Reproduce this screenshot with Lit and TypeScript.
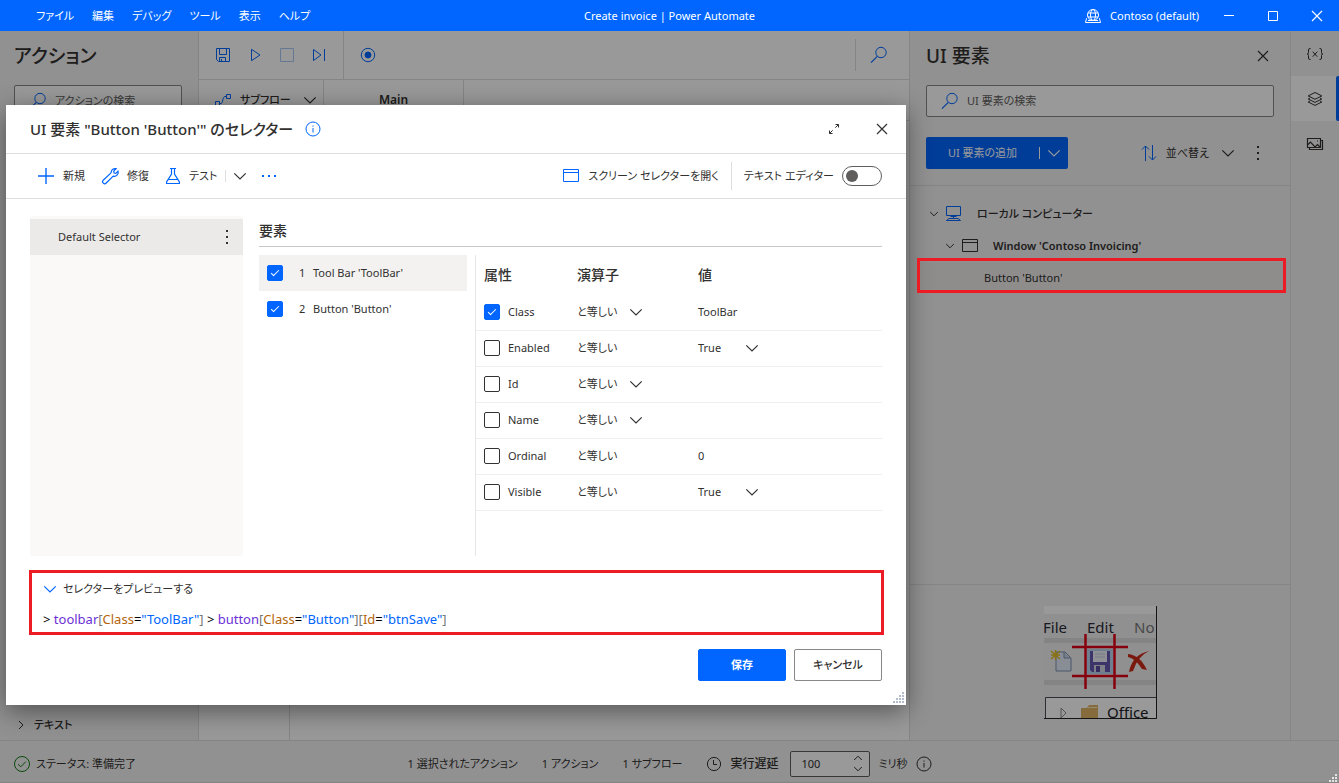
import { LitElement, html, svg, css, nothing } from "lit";
import { customElement } from "lit/decorators.js";
import { classMap } from "lit/directives/class-map.js";

const shapes: Record<string, { w: number; h: number; body: unknown }> = {
  save: { w: 16, h: 16, body: svg`<path d="M1.5 1.5h13v13H3.5l-2-2zM4.5 1.5v6h7v-6M4.5 14.5v-4h6v4M6.5 14v-2"/>` },
  play: { w: 16, h: 16, body: svg`<path d="M4.500 2.300v11.400l8.500-5.700z"/>` },
  stop: { w: 16, h: 16, body: svg`<path d="M1.500 1.500h13v13h-13z"/>` },
  step: { w: 16, h: 16, body: svg`<path d="M2.500 2.500v11l7.500-5.500zM13.500 2v12"/>` },
  record: { w: 16, h: 16, body: svg`<circle cx="8" cy="8" r="6.700"/><circle cx="8" cy="8" r="3" class="solid"/>` },
  search: { w: 18, h: 18, body: svg`<circle cx="11" cy="6.500" r="5.200"/><path d="M7.300 10.300L1 16.700" stroke-width="1.200"/>` },
  flow: { w: 18, h: 14, body: svg`<path d="M1.500 8.500h4v4h-4zM12.500 1.500h4v4h-4zM5.500 10.500h1.500c2 0 1.500-7 4-7h1.500"/>` },
  down: { w: 14, h: 14, body: svg`<path d="M1.300 4.300L7 10l5.700-5.700" stroke-width="1.200"/>` },
  downSmall: { w: 10, h: 10, body: svg`<path d="M1.200 3L5 6.800 8.800 3"/>` },
  upSmall: { w: 10, h: 10, body: svg`<path d="M1.200 7L5 3.200 8.800 7"/>` },
  right: { w: 10, h: 10, body: svg`<path d="M3 1l4 4-4 4"/>` },
  close: { w: 14, h: 14, body: svg`<path d="M2 2l10 10M12 2L2 12" stroke-width="1.200"/>` },
  minimize: { w: 12, h: 12, body: svg`<path d="M1 5.500h10"/>` },
  maximize: { w: 12, h: 12, body: svg`<path d="M1.500 1.500h9v9h-9z"/>` },
  globe: {
    w: 18,
    h: 16,
    body: svg`<circle cx="9" cy="7" r="5.500"/><ellipse cx="9" cy="7" rx="2.500" ry="5.500"/><path d="M4 5h10M4 9h10M3 10.500H2.500l-1 4h15l-1-4H15M4 12.500h10"/>`,
  },
  sort: { w: 18, h: 18, body: svg`<path d="M5.500 17V2M2 5.500L5.500 2 9 5.500M12.500 1v15M9 12.500l3.500 3.500 3.500-3.500"/>` },
  more: {
    w: 4,
    h: 16,
    body: svg`<path class="dots" d="M1 1h2v2H1zM1 7h2v2H1zM1 13h2v2H1z"/>`,
  },
  moreWide: {
    w: 16,
    h: 4,
    body: svg`<path class="dots" d="M1 1h2v2H1zM7 1h2v2H7zM13 1h2v2h-2z"/>`,
  },
  computer: { w: 18, h: 18, body: svg`<path d="M1.500 1.500h14v9h-14zM8.500 10.500v3M5.500 11.500h6M4 13.500h9l2.500 2h-14z"/>` },
  window: { w: 18, h: 16, body: svg`<path d="M1.500 1.500h15v12h-15zM1.500 4.500h15"/>` },
  vars: { w: 18, h: 14, body: svg`<path d="M4.500 1.500H4q-1.500 0-1.500 1.500v2.500q0 1.500-1.300 1.500 1.300 0 1.300 1.500V11q0 1.500 1.500 1.500h.5M13.500 1.500h.5q1.500 0 1.500 1.500v2.500q0 1.500 1.300 1.500-1.300 0-1.300 1.500V11q0 1.500-1.500 1.500h-.5M6.700 4.700l4.600 5M11.300 4.700l-4.600 5"/>` },
  layers: { w: 16, h: 16, body: svg`<path d="M8 1.500l6.800 3.400L8 8.300 1.200 4.900zM3 7l-1.800 1L8 11.400 14.800 8 13 7M3 10l-1.800 1L8 14.400l6.800-3.400L13 10"/>` },
  images: { w: 18, h: 14, body: svg`<path d="M1.500 1.500h13v9h-13zM3.500 10.500v2h13v-9h-2M1.500 8l3-3 4.500 5 2.500-2.500 3 3M11 4h1" stroke-width="1.200"/>` },
  info: { w: 16, h: 16, body: svg`<circle cx="8" cy="8" r="7"/><path d="M8 7v4.500M8 4.500v1.200"/>` },
  plus: { w: 18, h: 18, body: svg`<path d="M9 1v16M1 9h16" stroke-width="1.400"/>` },
  wrench: { w: 18, h: 18, body: svg`<path d="M10.200 5.300a3.900 3.900 0 0 1 4.900-3.600l-2.400 2.500.4 1.800 1.800.4 2.100-2.200a3.900 3.900 0 0 1-4.800 4.900l-7 6.900a1.900 1.900 0 0 1-3-2.800l7-6.600z" stroke-width="1.200"/>` },
  flask: { w: 16, h: 18, body: svg`<path d="M5 1.500h6M6.500 1.500v5.500L1.600 15v1.500h12.800V15L9.500 7V1.500M3.500 12.500h9" stroke-width="1.200"/>` },
  expand: { w: 12, h: 12, body: svg`<path d="M7.500 1.500h3v3M10.500 1.500l-3.200 3.200M4.500 10.500h-3v-3M1.500 10.500l3.200-3.200"/>` },
  done: { w: 18, h: 18, body: svg`<circle cx="9" cy="9" r="7.500"/><path d="M5 9.200l2.800 2.600 5-5.200"/>` },
  clock: { w: 16, h: 16, body: svg`<circle cx="8" cy="8" r="6.600"/><path d="M7.500 4v4.500h3.500"/>` },
  grip: {
    w: 12,
    h: 12,
    body: svg`<path class="dots" d="M9 0h2v2H9zM6 3h2v2H6zM9 3h2v2H9zM3 6h2v2H3zM6 6h2v2H6zM9 6h2v2H9zM0 9h2v2H0zM3 9h2v2H3zM6 9h2v2H6zM9 9h2v2H9z"/>`,
  },
  gripSmall: {
    w: 9,
    h: 9,
    body: svg`<path class="dots" d="M6 0h2v2H6zM3 3h2v2H3zM6 3h2v2H6zM0 6h2v2H0zM3 6h2v2H3zM6 6h2v2H6z"/>`,
  },
};

const icon = (name: string, tone = "") => {
  const s = shapes[name];
  return html`<svg class="icon ${tone}" width=${s.w} height=${s.h} viewBox="0 0 ${s.w} ${s.h}" aria-hidden="true">${s.body}</svg>`;
};

const shared = css`
  :host {
    --blue: #0066ff;
    --ink: #323130;
    --line: #dedede;
    --panel: #f2f2f2;
    color: var(--ink);
    font-family: "Noto Sans", "Noto Sans CJK JP", sans-serif;
    font-size: 11px;
    line-height: 16px;
    font-feature-settings: "palt";
  }
  *, *::before, *::after { box-sizing: border-box; }
  h1, h2, p, ul { margin: 0; padding: 0; font-weight: 500; }
  ul { list-style: none; }
  button, input, select {
    font: inherit;
    font-feature-settings: inherit;
    color: inherit;
    margin: 0;
    padding: 0;
    border: 0;
    border-radius: 0;
    background: none;
    white-space: nowrap;
  }
  button { display: inline-flex; align-items: center; justify-content: center; }
  .icon { display: block; flex: none; fill: none; stroke: currentColor; stroke-width: 1; }
  .icon .solid, .icon .dots { fill: currentColor; }
  .icon .dots { stroke: none; }
  .blue { color: var(--blue); }
  .pale { color: #a9c8f5; }
  .green { color: #107c10; }
`;

@customElement("selector-dialog")
export class SelectorDialog extends LitElement {
  static styles = [
    shared,
    css`
      :host { display: flex; flex-direction: column; background: #fff; position: relative; }
      header { display: flex; align-items: center; height: 49px; padding: 0 12px 0 24px; border-bottom: 1px solid var(--line); }
      header h1 { font-size: 15px; line-height: 20px; margin-right: 12px; }
      header .spacer, .tools .spacer { flex: 1; }
      header .sq { width: 24px; height: 32px; margin-left: 24px; }
      .tools { display: flex; align-items: center; height: 45px; padding: 0 24px 0 31px; border-bottom: 1px solid var(--line); }
      .tools button { gap: 8px; margin-right: 16px; }
      .tools .test { margin-right: 8px; }
      .tools .drop { margin-right: 14px; padding-left: 7px; border-left: 1px solid var(--line); height: 12px; }
      .tools .open { margin-right: 12px; }
      .tools label { display: flex; align-items: center; gap: 8px; border-left: 1px solid var(--line); height: 28px; padding-left: 12px; }
      .toggle { appearance: none; width: 40px; height: 20px; border: 1px solid #605e5c; border-radius: 10px; padding: 3px; display: flex; }
      .toggle::before { content: ""; width: 12px; height: 12px; border-radius: 50%; background: #605e5c; }
      .main { display: grid; grid-template-columns: 213px minmax(0, 1fr); gap: 16px; padding: 17px 24px 0; min-height: 357px; }
      .selectors { background: #faf9f8; border-radius: 3px; padding-top: 3px; }
      .selector { display: flex; align-items: center; justify-content: space-between; height: 36px; padding: 0 14px 0 28px; background: #ebeae9; }
      .elements { display: flex; flex-direction: column; }
      .elements h2 { font-size: 14px; line-height: 30px; border-bottom: 1px solid #c8c8c8; }
      .split { display: grid; grid-template-columns: 208px minmax(0, 1fr); gap: 8px; flex: 1; padding-top: 8px; }
      .item { display: flex; align-items: center; height: 36px; padding-left: 8px; }
      .item.on { background: #f3f2f1; }
      .item .num { width: 14px; margin-left: 16px; }
      .check { appearance: none; flex: none; width: 16px; height: 16px; border: 1px solid #323130; border-radius: 2px; display: grid; place-items: center; }
      .check:checked { background: var(--blue); border-color: var(--blue); }
      .check:checked::before { content: ""; width: 8px; height: 4px; border: solid #fff; border-width: 0 0 1px 1px; transform: translateY(-1px) rotate(-45deg); }
      .attrs { border-left: 1px solid #e6e6e6; }
      table { width: 100%; border-collapse: collapse; table-layout: fixed; }
      .c-name { width: 101px; }
      .c-op { width: 121px; }
      th { font-size: 14px; font-weight: 500; text-align: left; height: 39px; padding: 0; }
      th:first-child { padding-left: 8px; }
      td { height: 36px; padding: 0; border-bottom: 1px solid #efefef; }
      .attr { display: flex; align-items: center; gap: 8px; padding-left: 8px; }
      .pick { display: grid; align-items: center; width: 66px; }
      .pick.value { width: 61px; }
      .pick select { grid-area: 1 / 1; appearance: none; width: 100%; height: 20px; }
      .pick .icon { grid-area: 1 / 1; justify-self: end; pointer-events: none; }
      .preview { display: flex; flex-direction: column; align-items: flex-start; margin: 14px 22px 0 23px; border: 3px solid #ed1c24; padding: 8px 11px 3px; }
      .preview button { gap: 6px; }
      .code { font-size: 13px; line-height: 20px; font-weight: 400; margin-top: 12px; color: #000; }
      .tag { color: #6b2fd6; }
      .key { color: #b3640a; }
      .str { color: var(--blue); }
      .br { color: #767676; }
      footer { display: flex; justify-content: flex-end; gap: 8px; padding: 14px 24px 24px; }
      footer button { width: 88px; height: 32px; border-radius: 2px; border: 1px solid #8a8886; font-weight: 500; }
      footer .primary { background: var(--blue); border-color: var(--blue); color: #fff; font-weight: 600; }
      .resize { position: absolute; right: 1px; bottom: 1px; color: #b4bccb; }
    `,
  ];

  private elements = [
    { n: 1, label: "Tool Bar 'ToolBar'", on: true },
    { n: 2, label: "Button 'Button'", on: false },
  ];

  private attrs = [
    { name: "Class", checked: true, op: true, value: "ToolBar" },
    { name: "Enabled", value: "True", list: true },
    { name: "Id", op: true, value: "" },
    { name: "Name", op: true, value: "" },
    { name: "Ordinal", value: "0" },
    { name: "Visible", value: "True", list: true },
  ] as { name: string; checked?: boolean; op?: boolean; value: string; list?: boolean }[];

  private pick(label: string, text: string, value = false) {
    return html`<span class=${classMap({ pick: true, value })}><select aria-label=${label}><option>${text}</option></select>${icon("down")}</span>`;
  }

  render() {
    return html`
      <header>
        <h1>UI 要素 "Button 'Button'" のセレクター</h1>
        ${icon("info", "blue")}
        <span class="spacer"></span>
        <button class="sq" aria-label="最大化">${icon("expand")}</button>
        <button class="sq" aria-label="閉じる">${icon("close")}</button>
      </header>
      <div class="tools">
        <button>${icon("plus", "blue")}新規</button>
        <button>${icon("wrench", "blue")}修復</button>
        <button class="test">${icon("flask", "blue")}テスト</button>
        <button class="drop" aria-label="テスト オプション">${icon("down")}</button>
        <button class="blue" aria-label="その他">${icon("moreWide")}</button>
        <span class="spacer"></span>
        <button class="open">${icon("window", "blue")}スクリーン セレクターを開く</button>
        <label>テキスト エディター<input class="toggle" type="checkbox" role="switch" /></label>
      </div>
      <div class="main">
        <div class="selectors">
          <div class="selector">Default Selector<button aria-label="その他">${icon("more")}</button></div>
        </div>
        <div class="elements">
          <h2>要素</h2>
          <div class="split">
            <div>
              ${this.elements.map(
                (e) => html`<label class=${classMap({ item: true, on: e.on })}>
                  <input class="check" type="checkbox" checked /><span class="num">${e.n}</span>${e.label}
                </label>`
              )}
            </div>
            <div class="attrs">
              <table>
                <colgroup><col class="c-name" /><col class="c-op" /><col /></colgroup>
                <thead><tr><th>属性</th><th>演算子</th><th>値</th></tr></thead>
                <tbody>
                  ${this.attrs.map(
                    (a) => html`<tr>
                      <td><label class="attr"><input class="check" type="checkbox" ?checked=${!!a.checked} />${a.name}</label></td>
                      <td>${a.op ? this.pick(a.name + " 演算子", "と等しい") : "と等しい"}</td>
                      <td>${a.list ? this.pick(a.name + " 値", a.value, true) : a.value || nothing}</td>
                    </tr>`
                  )}
                </tbody>
              </table>
            </div>
          </div>
        </div>
      </div>
      <div class="preview">
        <button><span class="blue">${icon("down")}</span>セレクターをプレビューする</button>
        <p class="code">&gt; <span class="tag">toolbar</span><span class="br">[</span><span class="key">Class</span>=<span class="str">"ToolBar"</span><span class="br">]</span> &gt; <span class="tag">button</span><span class="br">[</span><span class="key">Class</span>=<span class="str">"Button"</span><span class="br">][</span><span class="key">Id</span>=<span class="str">"btnSave"</span><span class="br">]</span></p>
      </div>
      <footer><button class="primary">保存</button><button>キャンセル</button></footer>
      <span class="resize">${icon("grip")}</span>
    `;
  }
}

@customElement("app-root")
export class AppRoot extends LitElement {
  static styles = [
    shared,
    css`
      :host { display: flex; flex-direction: column; min-height: 100vh; position: relative; background: var(--panel); }
      .title { display: grid; grid-template-columns: 1fr auto 1fr; align-items: center; height: 31px; background: var(--blue); color: #fff; }
      .menu { display: flex; padding-left: 27px; }
      .menu button { padding: 0 9px; height: 31px; }
      .account { display: flex; align-items: center; justify-content: flex-end; }
      .account .name { margin: 0 8px; }
      .account button { width: 44px; height: 31px; }
      .work { flex: 1; display: flex; flex-direction: column; position: relative; }
      .panes { flex: 1; display: grid; grid-template-columns: 199px minmax(0, 1fr) 382px 48px; }
      .pane-title { font-size: 19px; line-height: 24px; }
      .find { display: flex; align-items: center; height: 32px; border: 1px solid #8a8886; border-radius: 2px; background: #fff; padding-left: 14px; gap: 8px; }
      .find input { flex: 1; min-width: 0; outline: 0; }
      .find input::placeholder { color: #605e5c; opacity: 1; }
      .actions { display: flex; flex-direction: column; border-right: 1px solid var(--line); padding: 13px 16px 0 14px; }
      .actions .find { margin-top: 17px; }
      .actions .group { display: flex; align-items: center; gap: 8px; height: 30px; margin-top: auto; font-weight: 500; padding-left: 2px; justify-content: flex-start; }
      .canvas { background: #fff; display: flex; flex-direction: column; }
      .bar { display: flex; align-items: center; height: 49px; border-bottom: 1px solid var(--line); }
      .bar .set { display: flex; align-items: center; height: 48px; padding: 0 8px; }
      .bar .set + .set { border-left: 1px solid var(--line); }
      .bar button { width: 32px; height: 32px; }
      .bar .seek { margin-left: auto; width: 54px; border-left: 1px solid var(--line); padding-right: 8px; }
      .tabs { display: flex; height: 41px; border-bottom: 1px solid var(--line); }
      .tabs button { border-right: 1px solid var(--line); gap: 8px; }
      .tabs .sub { width: 125px; font-weight: 500; justify-content: flex-start; padding-left: 15px; }
      .tabs .tab { width: 140px; font-size: 12px; font-weight: 600; }
      .tabs .sub .icon:last-child { margin-left: 4px; }
      .lines { flex: 1; width: 91px; border-right: 1px solid var(--line); }
      .ui { display: flex; flex-direction: column; border: solid var(--line); border-width: 0 1px; }
      .ui .head { display: flex; align-items: center; justify-content: space-between; padding: 13px 20px 0 16px; }
      .ui .find { margin: 17px 16px 0; }
      .cmds { display: flex; align-items: center; padding: 20px 16px 16px; border-bottom: 1px solid var(--line); }
      .add { width: 142px; height: 32px; border-radius: 2px; background: var(--blue); color: #fff; }
      .add .text { flex: 1; }
      .add .arrow { border-left: 1px solid #fff; height: 12px; padding: 0 7px; display: flex; align-items: center; }
      .order { margin-left: auto; gap: 8px; }
      .order .icon:last-child { margin-left: 4px; }
      .dots-btn { width: 16px; margin: 0 8px 0 15px; }
      .tree { flex: 1; padding-top: 12px; }
      .node { display: flex; align-items: center; height: 32px; gap: 6px; }
      .l1 { padding-left: 19px; font-weight: 500; }
      .l2 { padding-left: 35px; font-weight: 600; }
      .node .name { margin-left: 8px; }
      .l3 { height: 30px; margin: 0 4px 0 8px; padding: 2px 0 0 66px; background: #edebe9; font-weight: 400; position: relative; }
      .mark { position: absolute; inset: -4px 0 -1px -1px; border: 3px solid #ed1c24; z-index: 3; }
      .shot { border-top: 1px solid var(--line); display: grid; place-items: center; height: 156px; }
      .shot svg { display: block; }
      .rail { display: flex; flex-direction: column; }
      .rail button { height: 45px; }
      .rail .on { background: #fff; position: relative; }
      .rail .on::after { content: ""; position: absolute; right: 0; top: 0; bottom: 0; width: 3px; background: var(--blue); border-radius: 2px 0 0 2px; }
      .status { display: grid; grid-template-columns: 1fr auto 1fr; align-items: center; height: 43px; border: solid var(--line); border-width: 1px 0; padding: 4px 13px 0; }
      .state { display: flex; align-items: center; gap: 5px; }
      .counts { display: flex; align-items: center; gap: 24px; }
      .delay { display: flex; align-items: center; gap: 8px; }
      .delay label { font-weight: 500; font-size: 12px; margin-right: 4px; }
      .spin { display: flex; align-items: center; width: 80px; height: 26px; border: 1px solid #605e5c; border-radius: 2px; background: #fff; padding: 0 6px 0 10px; }
      .spin input { flex: 1; min-width: 0; outline: 0; appearance: textfield; }
      .spin input::-webkit-inner-spin-button { appearance: none; }
      .spin span { display: flex; flex-direction: column; gap: 1px; }
      .dim { position: absolute; inset: 0; background: rgba(0, 0, 0, 0.4); z-index: 1; }
      .modal { position: absolute; left: 6px; top: 74px; width: min(900px, calc(100% - 12px)); z-index: 2; box-shadow: 0 6px 24px rgba(0, 0, 0, 0.45); }
      .corner { position: absolute; right: 1px; bottom: 0; z-index: 3; color: #e4e4e4; }
    `,
  ];

  private snapshot() {
    return svg`<svg width="113" height="113" viewBox="0 0 113 113" role="img" aria-label="Button">
      <rect width="113" height="113" fill="#f0f0f0"/>
      <rect width="113" height="8" fill="#fff"/>
      <rect y="32" width="113" height="5" fill="#dcdcdc"/>
      <rect y="74" width="113" height="5" fill="#dcdcdc"/>
      <g font-family="Noto Sans, sans-serif" font-size="15" fill="#2b2b38">
        <text x="-1" y="27">File</text><text x="43" y="27">Edit</text><text x="90" y="27" fill="#777">No</text>
      </g>
      <path d="M12 46h9l6 6v13H12z" fill="#e4ecf8" stroke="#7d90ae"/><path d="M20 46v6h6" fill="#c6d6ec" stroke="#7d90ae"/>
      <path d="M7 45l9 8M16 45l-9 8M11.500 44v10M7 49h9" stroke="#e4bd23" stroke-width="1.500"/>
      <rect x="43" y="43" width="26" height="25" fill="#b8d4ee"/>
      <path d="M46 45h20v21H48l-2-2z" fill="#6658b0"/><rect x="49" y="45" width="14" height="11" fill="#eef1fa"/>
      <path d="M51 48h10M51 51h10" stroke="#c9cede"/><rect x="50" y="59" width="11" height="7" fill="#d2d6e2"/><rect x="52" y="60" width="4" height="6" fill="#5a4aa4"/>
      <path d="M84 48q12 1 19 16l-5-1Q91 52 84 51zM105 45Q94 50 89 65l-4 1Q88 49 105 45z" fill="#cc2a18"/>
      <path d="M28 41h56M28 70h56M41.500 28v55M70.500 28v55" stroke="#e00016" stroke-width="2.500"/>
      <path d="M1.500 113V91.500H113V113z" fill="#fff" stroke="#4a4a58"/>
      <path d="M17 102v10l5-5z" fill="none" stroke="#888"/>
      <path d="M37 102h6l2-3h9v14H37z" fill="#dfb267"/><path d="M44 101.500h9" stroke="#f8e7c2"/>
      <text x="63" y="112" font-family="Noto Sans, sans-serif" font-size="15" fill="#1c1c28">Office</text>
      <path d="M112.500 0v112.500H0" fill="none" stroke="#222"/>
    </svg>`;
  }

  render() {
    return html`
      <div class="title">
        <nav class="menu">${["ファイル", "編集", "デバッグ", "ツール", "表示", "ヘルプ"].map((m) => html`<button>${m}</button>`)}</nav>
        <span>Create invoice | Power Automate</span>
        <div class="account">
          ${icon("globe")}<span class="name">Contoso (default)</span>
          <button aria-label="最小化">${icon("minimize")}</button>
          <button aria-label="最大化">${icon("maximize")}</button>
          <button aria-label="閉じる">${icon("close")}</button>
        </div>
      </div>
      <div class="work">
        <div class="panes">
          <aside class="actions">
            <h2 class="pane-title">アクション</h2>
            <label class="find">${icon("search", "blue")}<input type="text" aria-label="アクションの検索" placeholder="アクションの検索" /></label>
            <button class="group">${icon("right")}テキスト</button>
          </aside>
          <main class="canvas">
            <div class="bar">
              <div class="set">
                <button aria-label="保存">${icon("save", "blue")}</button>
                <button aria-label="実行">${icon("play", "blue")}</button>
                <button aria-label="停止">${icon("stop", "pale")}</button>
                <button aria-label="ステップ実行">${icon("step", "blue")}</button>
              </div>
              <div class="set"><button aria-label="レコーダー">${icon("record", "blue")}</button></div>
              <button class="seek" aria-label="検索">${icon("search", "blue")}</button>
            </div>
            <div class="tabs">
              <button class="sub">${icon("flow", "blue")}サブフロー${icon("down")}</button>
              <button class="tab">Main</button>
            </div>
            <div class="lines"></div>
          </main>
          <aside class="ui">
            <div class="head"><h2 class="pane-title">UI 要素</h2><button aria-label="閉じる">${icon("close")}</button></div>
            <label class="find">${icon("search", "blue")}<input type="text" aria-label="UI 要素の検索" placeholder="UI 要素の検索" /></label>
            <div class="cmds">
              <button class="add"><span class="text">UI 要素の追加</span><span class="arrow">${icon("down")}</span></button>
              <button class="order">${icon("sort", "blue")}並べ替え${icon("down")}</button>
              <button class="dots-btn" aria-label="その他">${icon("more")}</button>
            </div>
            <ul class="tree">
              <li class="node l1">${icon("downSmall")}${icon("computer", "blue")}<span class="name">ローカル コンピューター</span></li>
              <li class="node l2">${icon("downSmall")}${icon("window")}<span class="name">Window 'Contoso Invoicing'</span></li>
              <li class="node l3">Button 'Button'<span class="mark"></span></li>
            </ul>
            <div class="shot">${this.snapshot()}</div>
          </aside>
          <nav class="rail">
            <button aria-label="変数">${icon("vars")}</button>
            <button class="on" aria-label="UI 要素">${icon("layers")}</button>
            <button aria-label="画像">${icon("images")}</button>
          </nav>
        </div>
        <footer class="status">
          <span class="state">${icon("done", "green")}ステータス: 準備完了</span>
          <div class="counts">
            <span>1 選択されたアクション</span><span>1 アクション</span><span>1 サブフロー</span>
            <div class="delay">
              ${icon("clock")}<label for="delay">実行遅延</label>
              <div class="spin"><input id="delay" type="number" value="100" /><span>${icon("upSmall")}${icon("downSmall")}</span></div>
              ミリ秒 ${icon("info")}
            </div>
          </div>
        </footer>
        <div class="dim"></div>
        <selector-dialog class="modal" role="dialog" aria-label="UI 要素のセレクター"></selector-dialog>
        <span class="corner">${icon("gripSmall")}</span>
      </div>
    `;
  }
}
